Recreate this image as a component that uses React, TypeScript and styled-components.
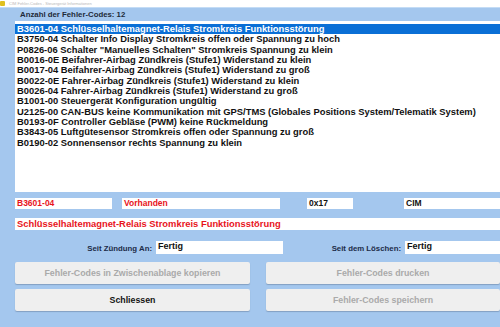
import styled, { createGlobalStyle } from "styled-components";

const Global = createGlobalStyle`
  html, body { margin: 0; padding: 0; }
  body { font-family: "Liberation Sans", Arial, sans-serif; }
`;

const codes = [
  "B3601-04 Schlüsselhaltemagnet-Relais Stromkreis Funktionsstörung",
  "B3750-04 Schalter Info Display Stromkreis offen oder Spannung zu hoch",
  'P0826-06 Schalter "Manuelles Schalten" Stromkreis Spannung zu klein',
  "B0016-0E Beifahrer-Airbag Zündkreis (Stufe1) Widerstand zu klein",
  "B0017-04 Beifahrer-Airbag Zündkreis (Stufe1) Widerstand zu groß",
  "B0022-0E Fahrer-Airbag Zündkreis (Stufe1) Widerstand zu klein",
  "B0026-04 Fahrer-Airbag Zündkreis (Stufe1) Widerstand zu groß",
  "B1001-00 Steuergerät Konfiguration ungültig",
  "U2125-00 CAN-BUS keine Kommunikation mit GPS/TMS (Globales Positions System/Telematik System)",
  "B0193-0F Controller Gebläse (PWM) keine Rückmeldung",
  "B3843-05 Luftgütesensor Stromkreis offen oder Spannung zu groß",
  "B0190-02 Sonnensensor rechts Spannung zu klein",
];

const Window = styled.div`
  width: 500px;
  height: 327px;
  background: #a4c7ee;
  overflow: hidden;
`;

const TitleBar = styled.div`
  height: 7px;
  background: #ffffff;
  display: flex;
  align-items: center;
  gap: 4px;
  border-bottom: 1px solid #c4dcf5;
`;

const AppIcon = styled.div`
  width: 5px;
  height: 5px;
  background: #e0c020;
  border-radius: 1px;
`;

const TitleText = styled.span`
  font-size: 4px;
  color: #b8b8b8;
  white-space: nowrap;
`;

const Body = styled.div`
  padding-left: 15px;
`;

const CountLabel = styled.div`
  height: 13px;
  line-height: 14px;
  padding-left: 5px;
  font-size: 7.8px;
  font-weight: bold;
  color: #1e2a38;
`;

const List = styled.div`
  background: #ffffff;
  height: 171px;
  padding-top: 3px;
  box-sizing: border-box;
`;

const Item = styled.div<{ $selected?: boolean }>`
  height: 10.33px;
  line-height: 10.33px;
  padding-left: 2px;
  font-size: 9.4px;
  font-weight: bold;
  white-space: nowrap;
  overflow: hidden;
  color: ${(p) => (p.$selected ? "#ffffff" : "#111111")};
  background: ${(p) => (p.$selected ? "#0a6fd6" : "transparent")};
`;

const FieldRow = styled.div`
  display: flex;
  margin-top: 6px;
  height: 11px;
`;

const Field = styled.div<{ $w?: number; $ml?: number; $red?: boolean }>`
  ${(p) => (p.$w ? `width: ${p.$w}px;` : "flex: 1;")}
  margin-left: ${(p) => p.$ml ?? 0}px;
  background: #ffffff;
  font-size: 8.5px;
  font-weight: bold;
  line-height: 11px;
  padding-left: 2px;
  box-sizing: border-box;
  white-space: nowrap;
  overflow: hidden;
  color: ${(p) => (p.$red ? "#e8141c" : "#111111")};
`;

const DescRow = styled.div`
  margin-top: 9px;
  height: 12px;
  background: #ffffff;
  color: #e8141c;
  font-size: 9.4px;
  font-weight: bold;
  line-height: 12px;
  padding-left: 2px;
  white-space: nowrap;
`;

const StatusRow = styled.div`
  display: grid;
  grid-template-columns: 268px 1fr;
  margin-top: 11px;
  height: 13px;
`;

const StatusCell = styled.div`
  display: flex;
  align-items: center;
  justify-content: flex-end;
  gap: 4px;
`;

const StatusLabel = styled.span`
  font-size: 7.8px;
  font-weight: bold;
  color: #1c2c48;
  margin-top: 2px;
`;

const StatusValue = styled.div<{ $w: number }>`
  width: ${(p) => p.$w}px;
  height: 13px;
  background: #ffffff;
  font-size: 9px;
  font-weight: bold;
  line-height: 11px;
  padding-left: 2px;
  box-sizing: border-box;
  color: #111111;
`;

const Buttons = styled.div`
  display: grid;
  grid-template-columns: 235px 234px;
  column-gap: 16px;
  row-gap: 5px;
  margin-top: 8px;
`;

const Button = styled.button<{ $disabled?: boolean }>`
  height: 22px;
  background: #efefef;
  border: none;
  border-radius: 2px;
  box-shadow: 0 1px 1px rgba(90, 110, 140, 0.45);
  font-family: "Liberation Sans", Arial, sans-serif;
  font-size: 8.8px;
  font-weight: bold;
  color: ${(p) => (p.$disabled ? "#aaaaaa" : "#141414")};
  padding: 0;
`;

export default function App() {
  return (
    <Window>
      <Global />
      <TitleBar>
        <AppIcon />
        <TitleText>CIM Fehler-Codes - Steuergerät Informationen</TitleText>
      </TitleBar>
      <Body>
        <CountLabel>Anzahl der Fehler-Codes: 12</CountLabel>
        <List>
          {codes.map((c, i) => (
            <Item key={i} $selected={i === 0}>
              {c}
            </Item>
          ))}
        </List>
        <FieldRow>
          <Field $w={97} $red>B3601-04</Field>
          <Field $w={158} $ml={10} $red>Vorhanden</Field>
          <Field $w={46} $ml={27}>0x17</Field>
          <Field $ml={51}>CIM</Field>
        </FieldRow>
        <DescRow>Schlüsselhaltemagnet-Relais Stromkreis Funktionsstörung</DescRow>
        <StatusRow>
          <StatusCell>
            <StatusLabel>Seit Zündung An:</StatusLabel>
            <StatusValue $w={127}>Fertig</StatusValue>
          </StatusCell>
          <StatusCell>
            <StatusLabel>Seit dem Löschen:</StatusLabel>
            <StatusValue $w={95}>Fertig</StatusValue>
          </StatusCell>
        </StatusRow>
        <Buttons>
          <Button $disabled>Fehler-Codes in Zwischenablage kopieren</Button>
          <Button $disabled>Fehler-Codes drucken</Button>
          <Button>Schliessen</Button>
          <Button $disabled>Fehler-Codes speichern</Button>
        </Buttons>
      </Body>
    </Window>
  );
}
